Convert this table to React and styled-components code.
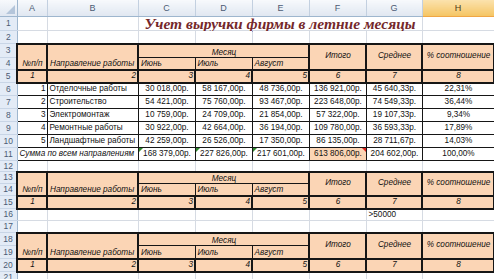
import React from 'react';
import styled, { createGlobalStyle } from 'styled-components';

const GRID = '#d6dbe3';
const INK = '#161616';
const PEACH = '#fbd5b5';

const edge = (w) => (w === 2 ? `2px solid ${INK}` : w === 1 ? `1px solid ${INK}` : `1px solid ${GRID}`);

const GlobalStyle = createGlobalStyle`
  html, body { margin: 0; padding: 0; background: #fff; }
  body { font-family: "Liberation Sans", Arial, sans-serif; overflow: hidden; }
`;

const Sheet = styled.table`
  border-collapse: collapse;
  table-layout: fixed;
  width: 494px;
  font-size: 8.2px;
  line-height: 1;
  color: #111;
`;

const Row = styled.tr`
  height: ${(p) => p.$h}px;
`;

const Corner = styled.th`
  position: relative;
  height: 16px;
  padding: 0;
  background: linear-gradient(#f7f9fc, #e0e7f1);
  border-right: 1px solid #9eb6ce;
  border-bottom: 1px solid #9eb6ce;

  &::after {
    content: '';
    position: absolute;
    right: 2px;
    bottom: 2px;
    border-left: 9px solid transparent;
    border-bottom: 9px solid #b4c5da;
  }
`;

const ColHead = styled.th`
  padding: 0;
  font-weight: normal;
  font-size: 9px;
  color: ${(p) => (p.$active ? '#4a3a1a' : '#4b5b74')};
  text-align: center;
  vertical-align: middle;
  background: ${(p) => (p.$active ? 'linear-gradient(#fbe2ad, #f5c564)' : 'linear-gradient(#f7f9fc, #e0e7f1)')};
  border-right: 1px solid ${(p) => (p.$active ? '#f0b155' : '#c3d0e0')};
  border-bottom: 1px solid ${(p) => (p.$active ? '#f0a645' : '#9eb6ce')};
`;

const RowHead = styled.th`
  padding: 0;
  font-weight: normal;
  font-size: 8.5px;
  color: #4b5b74;
  text-align: center;
  vertical-align: middle;
  background: #e3ebf6;
  border-right: 1px solid #9eb6ce;
  border-bottom: 1px solid #c8d5e6;
`;

const Cell = styled.td`
  position: relative;
  padding: 0 1px 0 2px;
  white-space: nowrap;
  overflow: hidden;
  text-align: ${(p) => p.$align || 'left'};
  vertical-align: ${(p) => p.$v || 'middle'};
  font-style: ${(p) => (p.$italic ? 'italic' : 'normal')};
  background: ${(p) => (p.$fill ? PEACH : '#fff')};
  border-top: ${(p) => edge(p.$t)};
  border-right: ${(p) => edge(p.$r)};
  border-bottom: ${(p) => edge(p.$b)};
  border-left: ${(p) => edge(p.$l)};
`;

const Title = styled.td`
  padding: 0;
  white-space: nowrap;
  font-family: "Liberation Serif", "Times New Roman", serif;
  font-weight: bold;
  font-style: italic;
  font-size: 15.5px;
  line-height: 12px;
  color: #74282b;
  text-align: center;
  vertical-align: middle;
  border: 1px solid ${GRID};
`;

const ErrorMark = styled.span`
  position: absolute;
  top: 0;
  left: 0;
  border-top: 4px solid #2f8a2f;
  border-right: 4px solid transparent;
`;

const NoteMark = styled.span`
  position: absolute;
  top: 0;
  right: 0;
  border-top: 4px solid #e0201b;
  border-left: 4px solid transparent;
`;

const columns = ['A', 'B', 'C', 'D', 'E', 'F', 'G', 'H'];
const widths = [17, 30, 91, 57, 57, 57, 57, 56, 72];

const works = [
  [1, 'Отделочные работы', '30 018,00р.', '58 167,00р.', '48 736,00р.', '136 921,00р.', '45 640,33р.', '22,31%'],
  [2, 'Строительство', '54 421,00р.', '75 760,00р.', '93 467,00р.', '223 648,00р.', '74 549,33р.', '36,44%'],
  [3, 'Электромонтаж', '10 759,00р.', '24 709,00р.', '21 854,00р.', '57 322,00р.', '19 107,33р.', '9,34%'],
  [4, 'Ремонтные работы', '30 922,00р.', '42 664,00р.', '36 194,00р.', '109 780,00р.', '36 593,33р.', '17,89%'],
  [5, 'Ландшафтные работы', '42 259,00р.', '26 526,00р.', '17 350,00р.', '86 135,00р.', '28 711,67р.', '14,03%'],
];

const EmptyRow = ({ n, h, children }) => (
  <Row $h={h}>
    <RowHead>{n}</RowHead>
    {children || columns.map((c) => <Cell key={c} />)}
  </Row>
);

// шапка таблицы: три строки (название граф, месяцы, номера граф)
const HeaderBlock = ({ start, heights }) => (
  <>
    <Row $h={heights[0]}>
      <RowHead>{start}</RowHead>
      <Cell rowSpan={2} $fill $italic $align="center" $v="bottom" $t={2} $l={2} $r={2} $b={2}>№п/п</Cell>
      <Cell rowSpan={2} $fill $italic $v="bottom" $t={2} $r={2} $b={2}>Направление работы</Cell>
      <Cell colSpan={3} $fill $italic $align="center" $v="bottom" $t={2} $r={2} $b={1}>Месяц</Cell>
      <Cell rowSpan={2} $fill $italic $align="center" $t={2} $r={2} $b={2}>Итого</Cell>
      <Cell rowSpan={2} $fill $italic $align="center" $t={2} $r={2} $b={2}>Среднее</Cell>
      <Cell rowSpan={2} $fill $italic $align="center" $t={2} $r={2} $b={2}>% соотношение</Cell>
    </Row>
    <Row $h={heights[1]}>
      <RowHead>{start + 1}</RowHead>
      <Cell $fill $italic $v="bottom" $t={1} $r={1} $b={2}>Июнь</Cell>
      <Cell $fill $italic $v="bottom" $t={1} $r={1} $b={2}>Июль</Cell>
      <Cell $fill $italic $v="bottom" $t={1} $r={2} $b={2}>Август</Cell>
    </Row>
    <Row $h={heights[2]}>
      <RowHead>{start + 2}</RowHead>
      {['center', 'right', 'right', 'right', 'right', 'center', 'center', 'center'].map((a, i) => (
        <Cell key={i} $fill $italic $align={a} $l={i === 0 ? 2 : undefined} $r={2} $b={2}>{i + 1}</Cell>
      ))}
    </Row>
  </>
);

const App = () => {
  return (
    <>
      <GlobalStyle />
      <Sheet>
        <colgroup>
          {widths.map((w, i) => <col key={i} style={{ width: w }} />)}
        </colgroup>
        <thead>
          <tr>
            <Corner />
            {columns.map((c) => <ColHead key={c} $active={c === 'H'}>{c}</ColHead>)}
          </tr>
        </thead>
        <tbody>
          <EmptyRow n={1} h={14}>
            <Cell />
            <Cell />
            <Title colSpan={5}>Учет выручки фирмы в летние месяцы</Title>
            <Cell />
          </EmptyRow>
          <EmptyRow n={2} h={13} />

          <HeaderBlock start={3} heights={[14, 12, 13]} />

          {works.map(([n, name, ...vals]) => (
            <Row key={n} $h={13}>
              <RowHead>{n + 5}</RowHead>
              <Cell $align="right" $l={1} $r={1} $b={1}>{n}</Cell>
              <Cell $r={1} $b={1}>{name}</Cell>
              {vals.map((v, i) => (
                <Cell key={i} $align="center" $r={1} $b={1}>{v}</Cell>
              ))}
            </Row>
          ))}

          <Row $h={13}>
            <RowHead>11</RowHead>
            <Cell colSpan={2} $italic $l={1} $r={1} $b={1}>Сумма по всем направлениям</Cell>
            <Cell $align="center" $r={1} $b={1}><ErrorMark />168 379,00р.</Cell>
            <Cell $align="center" $r={1} $b={1}><ErrorMark />227 826,00р.</Cell>
            <Cell $align="center" $r={1} $b={1}><ErrorMark />217 601,00р.</Cell>
            <Cell $align="center" $fill $r={1} $b={1}>613 806,00р.<NoteMark /></Cell>
            <Cell $align="center" $r={1} $b={1}>204 602,00р.</Cell>
            <Cell $align="center" $r={1} $b={1}>100,00%</Cell>
          </Row>

          <EmptyRow n={12} h={11} />
          <HeaderBlock start={13} heights={[12, 12, 13]} />
          <EmptyRow n={16} h={12}>
            {columns.map((c) => <Cell key={c}>{c === 'G' ? '>50000' : null}</Cell>)}
          </EmptyRow>
          <EmptyRow n={17} h={12} />
          <HeaderBlock start={18} heights={[13, 13, 13]} />
          <EmptyRow n={21} h={12} />
        </tbody>
      </Sheet>
    </>
  );
};

export default App;
